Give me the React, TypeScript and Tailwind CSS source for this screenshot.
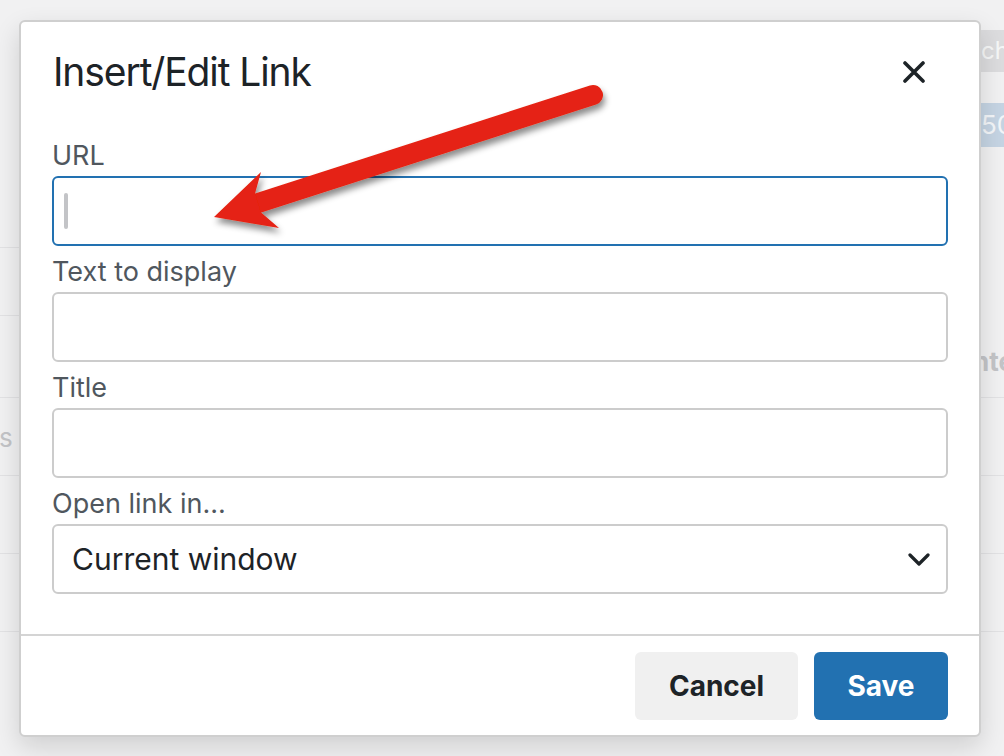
import React from "react";

const font = { fontFamily: "Inter, 'Noto Sans', 'Liberation Sans', sans-serif" };

const Field = ({ label, focused, children, first }: { label: string; focused?: boolean; children?: React.ReactNode; first?: boolean }) => (
  <div className={first ? "mt-[40px]" : "mt-[6px]"}>
    <div className="text-[27px] leading-[40px] text-[#50575e]">{label}</div>
    <div
      className={
        "h-[70px] rounded-[6px] border-2 bg-white flex items-center " +
        (focused ? "border-[#2271b1]" : "border-[#cccccc]")
      }
    >
      {children}
    </div>
  </div>
);

const Backdrop = () => (
  <div className="absolute inset-0 flex justify-between bg-[#f1f1f2]">
    <div className="w-[19px] flex flex-col pt-[247px]">
      <div className="h-[68px] border-t border-[#e2e2e4]" />
      <div className="h-[82px] border-t border-[#e2e2e4]" />
      <div className="h-[78px] border-t border-[#e2e2e4] flex items-center pt-[2px]">
        <span className="text-[26px] text-[#c3c4c7] leading-none -ml-[1px]">s</span>
      </div>
      <div className="h-[78px] border-t border-[#e2e2e4]" />
      <div className="h-[78px] border-t border-[#e2e2e4]" />
      <div className="h-[78px] border-t border-[#e2e2e4]" />
    </div>
    <div className="w-[23px] flex flex-col pt-[30px]">
      <div className="h-[42px] bg-[#dcdcde] flex items-center overflow-hidden">
        <span className="text-[24px] text-[#f6f7f7] leading-none whitespace-nowrap">ch</span>
      </div>
      <div className="h-[31px]" />
      <div className="h-[44px] bg-[#c5d4e3] flex items-center overflow-hidden">
        <span className="text-[26px] text-[#f3f6f9] leading-none whitespace-nowrap">50</span>
      </div>
      <div className="h-[250px] flex items-end pb-[22px] overflow-hidden">
        <span className="text-[26px] font-bold text-[#c3c4c7] leading-none whitespace-nowrap -ml-[8px]">nte</span>
      </div>
      <div className="h-[78px] border-t border-[#e2e2e4]" />
      <div className="h-[78px] border-t border-[#e2e2e4]" />
      <div className="h-[78px] border-t border-[#e2e2e4]" />
      <div className="h-[78px] border-t border-[#e2e2e4]" />
    </div>
  </div>
);

const Arrow = () => (
  <svg className="absolute inset-0 pointer-events-none" width="1004" height="756" viewBox="0 0 1004 756">
    <defs>
      <filter id="sh" x="-20%" y="-20%" width="140%" height="160%">
        <feDropShadow dx="2" dy="5" stdDeviation="3" floodColor="#000" floodOpacity="0.45" />
      </filter>
    </defs>
    <g filter="url(#sh)" fill="#e52412">
      <line x1="593" y1="95" x2="252" y2="205" stroke="#e52412" strokeWidth="20" strokeLinecap="round" />
      <polygon points="214,217 261,172 255,193.5 261,212.5 279,228" />
    </g>
  </svg>
);

export default function App() {
  return (
    <div className="relative w-[1004px] h-[756px] overflow-hidden" style={font}>
      <Backdrop />
      <div className="absolute left-[19px] top-[20px] w-[962px] h-[717px] bg-white border-2 border-[#cfcfcf] rounded-[6px] shadow-[0_10px_26px_rgba(0,0,0,0.14)] flex flex-col">
        <div className="px-[31px] pt-[26px]">
          <div className="flex items-center justify-between">
            <h1 className="text-[39px] leading-[48px] tracking-[-1.1px] text-[#1d2327] ml-[1px]">Insert/Edit Link</h1>
            <button className="mr-[23px] w-[22px] h-[22px] flex items-center justify-center">
              <svg width="22" height="22" viewBox="0 0 22 22">
                <path d="M2 2 L20 20 M20 2 L2 20" stroke="#1d2327" strokeWidth="3.6" strokeLinecap="round" fill="none" />
              </svg>
            </button>
          </div>
          <Field label="URL" focused first>
            <div className="ml-[10px] w-[4px] h-[36px] rounded-full bg-[#c3c4c7]" />
          </Field>
          <Field label="Text to display" />
          <Field label="Title" />
          <Field label="Open link in...">
            <div className="flex-1 flex items-center justify-between pl-[18px] pr-[16px]">
              <span className="text-[30px] text-[#1d2327]">Current window</span>
              <svg width="22" height="13" viewBox="0 0 22 13">
                <path d="M2 2 L11 11 L20 2" stroke="#1d2327" strokeWidth="3.2" strokeLinecap="round" strokeLinejoin="round" fill="none" />
              </svg>
            </div>
          </Field>
        </div>
        <div className="mt-[40px] border-t-2 border-[#d4d4d4] flex justify-end gap-[16px] px-[31px] pt-[16px]">
          <button className="w-[163px] h-[68px] rounded-[6px] bg-[#f0f0f0] text-[28px] font-bold text-[#1d2327]">Cancel</button>
          <button className="w-[134px] h-[68px] rounded-[6px] bg-[#2271b1] text-[28px] font-bold text-white">Save</button>
        </div>
      </div>
      <Arrow />
    </div>
  );
}
